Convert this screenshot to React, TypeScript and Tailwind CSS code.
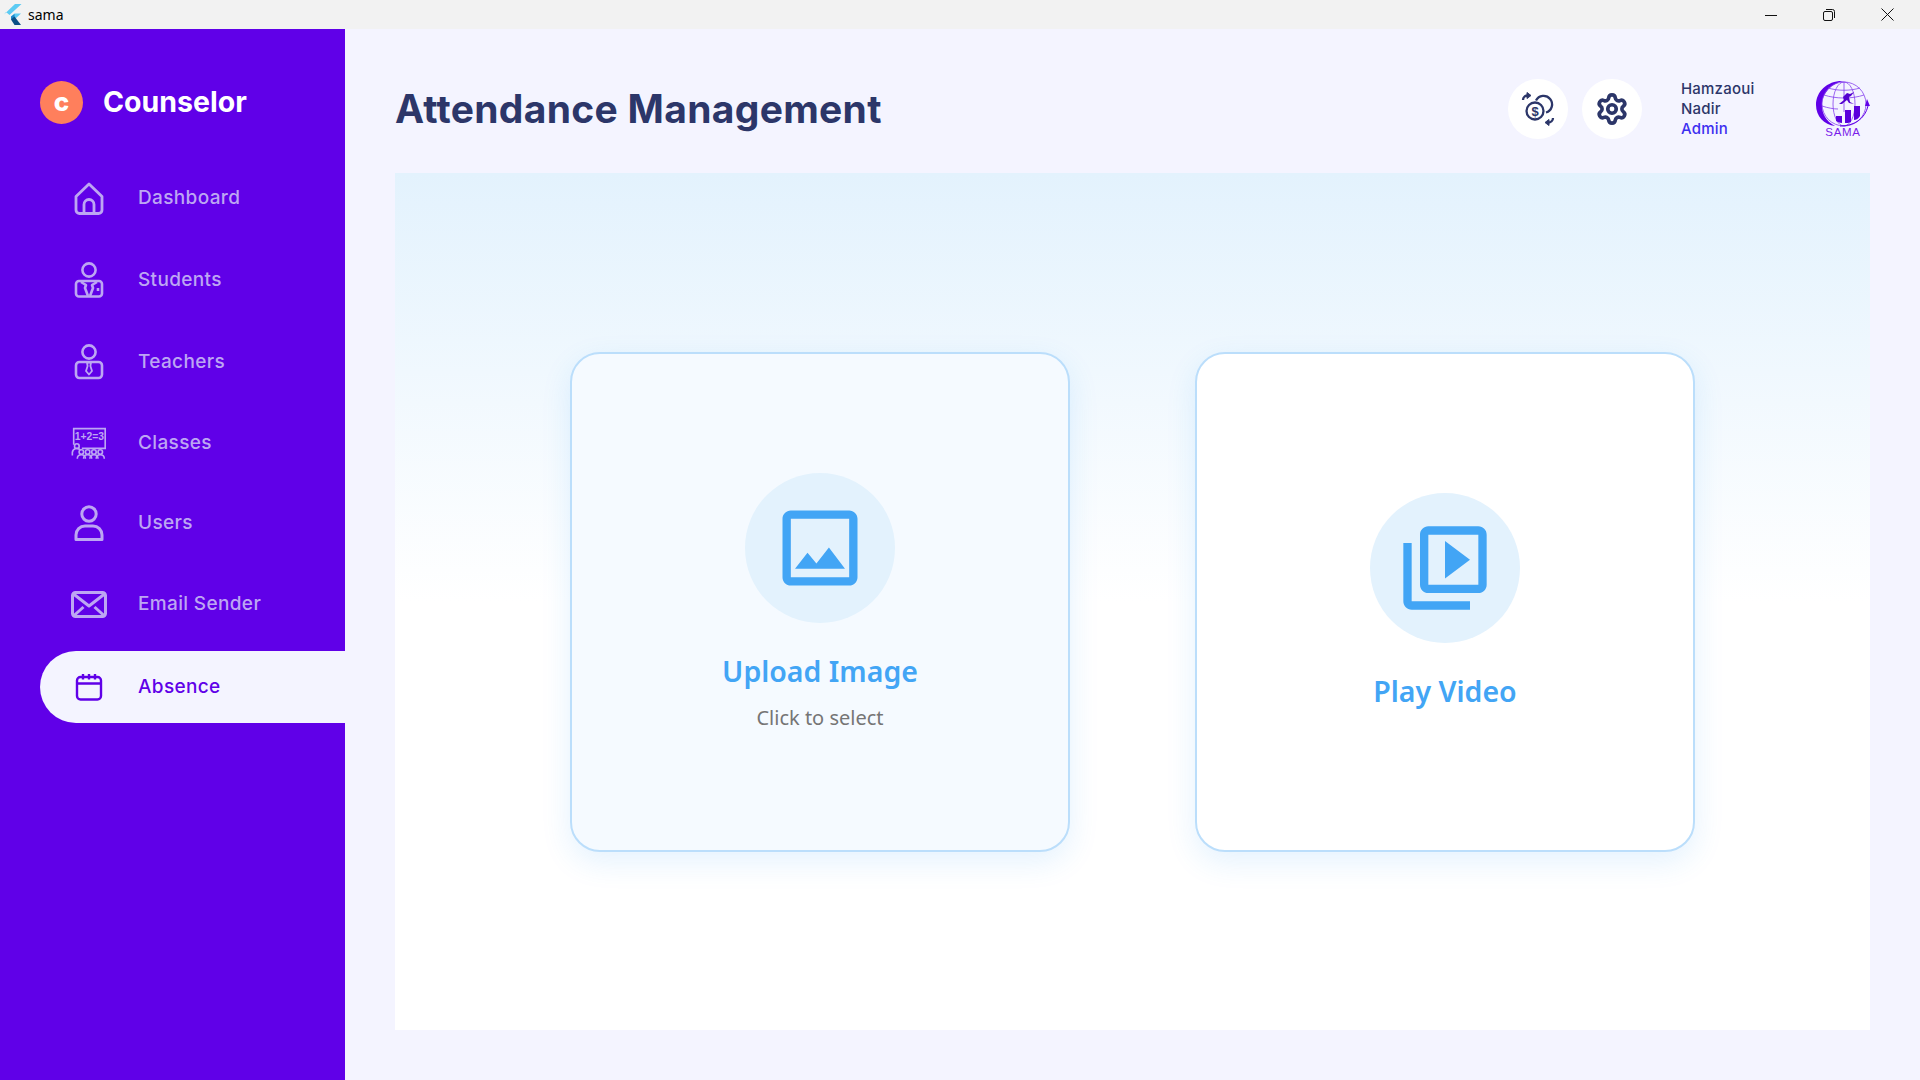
import { Settings } from "lucide-react";
import type { ReactNode } from "react";

const poppins = "font-['Inter','Liberation_Sans',sans-serif]";

function HomeIcon() {
  return (
    <svg width="30" height="33" viewBox="0 0 30 33" fill="none" stroke="currentColor" strokeWidth="2.8" strokeLinejoin="round">
      <path d="M2 14.5 15 2l13 12.5V28a3.5 3.5 0 0 1-3.5 3.5h-19A3.5 3.5 0 0 1 2 28Z" />
      <path d="M10 31V22.5a5 5 0 0 1 10 0V31" />
    </svg>
  );
}

function StudentIcon() {
  return (
    <svg width="30" height="36" viewBox="0 0 30 36" fill="none" stroke="currentColor" strokeWidth="2.6" strokeLinejoin="round">
      <circle cx="15" cy="8" r="6.6" />
      <rect x="2" y="19" width="26" height="15.5" rx="3" />
      <path d="M7 20l5 3-1 3 3 8M23 20l-5 3 1 3-3 8" />
      <path d="M24 26v3" />
    </svg>
  );
}

function TeacherIcon() {
  return (
    <svg width="30" height="36" viewBox="0 0 30 36" fill="none" stroke="currentColor" strokeWidth="2.6" strokeLinejoin="round">
      <circle cx="15" cy="8" r="6.6" />
      <rect x="2" y="18" width="26" height="16" rx="3.5" />
      <path d="M13 18.5h4l-.6 3.500 1.600 5-3 3.500-3-3.500 1.600-5Z" strokeWidth="1.8" />
    </svg>
  );
}

function ClassesIcon() {
  return (
    <svg width="40" height="36" viewBox="0 0 40 36" fill="none" stroke="currentColor" strokeWidth="1.8">
      <path d="M3 20V2h35v22H12" />
      <text x="20.5" y="15" textAnchor="middle" fontFamily="Liberation Sans, sans-serif" fontSize="11.5" fontWeight="700" fill="currentColor" stroke="none">
        1+2=3
      </text>
      <circle cx="6.5" cy="21.500" r="2.600" />
      <path d="M1.500 32v-3.500a5 5 0 0 1 9-2.500" />
      {[11, 18, 25, 32].map((x) => (
        <g key={x}>
          <circle cx={x + 0.5} cy="28" r="2.500" />
          <path d={`M${x - 4} 35.500c0-3 2-4.500 4.500-4.500S${x + 5} 32.500 ${x + 5} 35.500`} />
        </g>
      ))}
    </svg>
  );
}

function UserIcon() {
  return (
    <svg width="30" height="36" viewBox="0 0 30 36" fill="none" stroke="currentColor" strokeWidth="3" strokeLinejoin="round">
      <circle cx="15" cy="9" r="7.200" />
      <path d="M2 34.500V30a9 9 0 0 1 9-9h8a9 9 0 0 1 9 9v4.500Z" />
    </svg>
  );
}

function MailIcon() {
  return (
    <svg width="36" height="27" viewBox="0 0 36 27" fill="none" stroke="currentColor" strokeWidth="3" strokeLinejoin="round">
      <rect x="1.500" y="1.500" width="33" height="24" rx="3" />
      <path d="M2.500 3 18 15 33.500 3M3 24.500l9.500-8.500M33 24.500 23.500 16" />
    </svg>
  );
}

function CalendarIcon() {
  return (
    <svg width="28" height="28" viewBox="0 0 28 28" fill="none" stroke="currentColor" strokeWidth="2.400" strokeLinejoin="round">
      <rect x="2" y="4" width="24" height="22.500" rx="3.500" />
      <path d="M2 10.500h24M8 1v5.500M14 1v5.500M20 1v5.500" />
    </svg>
  );
}

function CoinsIcon() {
  return (
    <svg width="34" height="34" viewBox="0 0 34 34" fill="none" stroke="#2c3669" strokeWidth="2.300">
      <circle cx="14" cy="19" r="8.500" />
      <path d="M15 8.500a8.500 8.500 0 1 1 10 12" />
      <text x="14" y="23.500" textAnchor="middle" fontFamily="Liberation Sans, sans-serif" fontSize="13" fontWeight="700" fill="#2c3669" stroke="none">
        $
      </text>
      <path d="M2 8c0-2.500 2-4.500 5-4.500" />
      <path d="M6 .5l4 3-4 3Z" fill="#2c3669" strokeWidth="1" />
      <path d="M32 26c0 2.500-2 4.500-5 4.500" />
      <path d="M28 27.500l-4 3 4 3Z" fill="#2c3669" strokeWidth="1" />
    </svg>
  );
}

function SamaLogo() {
  return (
    <svg width="54" height="60" viewBox="0 0 54 60">
      <path d="M28 2C12 1 0 12 0 26c0 11 8 20 19 21C10 42 6 35 6 26 6 14 16 4 28 2Z" fill="#6000e8" />
      <g fill="none" stroke="#8540ee" strokeWidth=".8">
        <circle cx="28" cy="25" r="22" />
        <ellipse cx="28" cy="25" rx="11" ry="22" />
        <path d="M28 3v30M8 16c12 4 28 4 40 0M6 27c6 2 12 3 16 3M12 9c10 3 22 3 32 0" />
      </g>
      <path d="M27 18l4-4 3 1 4-2-3 4-2 1 1 5 4 2-5-1-2-3-5 4-3 0 5-4Z" fill="#5300d0" />
      <path d="M20 37h6v7c-2 0-4-1-6-2ZM29 31h6v12c-2 1-4 1-6 1ZM38 27h6v10c-2 3-4 4-6 4Z" fill="#5a00dc" />
      <path d="M24 47c14 0 25-7 28-20" fill="none" stroke="#6000e8" strokeWidth="1" />
      <path d="M51 20l3 7h-5Z" fill="#6000e8" />
      <text x="27" y="57" textAnchor="middle" fontFamily="Liberation Sans, sans-serif" fontSize="11.5" letterSpacing=".7" fill="#7a1bea">
        SAMA
      </text>
    </svg>
  );
}

function FlutterLogo() {
  return (
    <svg width="18" height="21" viewBox="0 0 18 21">
      <path d="M11 0h6.500L5.500 11 2 8 0 10.500Z" fill="#5ccbf3" />
      <path d="M10.500 9.500h6.500L10.500 15.500 7 12.500Z" fill="#5ccbf3" />
      <path d="M7 12.500l3.500-2.500v6l-3.500-.5Z" fill="#1c86c9" />
      <path d="M7 15.500l3.500-3 6.500 8.500h-6.500Z" fill="#0b4f86" />
    </svg>
  );
}

function ImageGlyph() {
  return (
    <svg width="100" height="100" viewBox="0 0 24 24" fill="#42a5f5">
      <path d="M19 5v14H5V5h14m0-2H5c-1.100 0-2 .9-2 2v14c0 1.100.9 2 2 2h14c1.100 0 2-.9 2-2V5c0-1.100-.9-2-2-2zm-4.860 8.860l-3 3.870L9 13.140 6 17h12l-3.860-5.140z" />
    </svg>
  );
}

function VideoGlyph() {
  return (
    <svg width="100" height="100" viewBox="0 0 24 24" fill="#42a5f5">
      <path d="M4 6H2v14c0 1.100.9 2 2 2h14v-2H4V6zm16-4H8c-1.100 0-2 .9-2 2v12c0 1.100.9 2 2 2h12c1.100 0 2-.9 2-2V4c0-1.100-.9-2-2-2zm0 14H8V4h12v12zM12 5.500v9l6-4.500z" />
    </svg>
  );
}

const NAV: { label: string; icon: ReactNode; gap: string; active?: boolean }[] = [
  { label: "Dashboard", icon: <HomeIcon />, gap: "mt-0" },
  { label: "Students", icon: <StudentIcon />, gap: "mt-[10px]" },
  { label: "Teachers", icon: <TeacherIcon />, gap: "mt-[10px]" },
  { label: "Classes", icon: <ClassesIcon />, gap: "mt-[9px]" },
  { label: "Users", icon: <UserIcon />, gap: "mt-[8px]" },
  { label: "Email Sender", icon: <MailIcon />, gap: "mt-[9px]" },
  { label: "Absence", icon: <CalendarIcon />, gap: "mt-[11px]", active: true },
];

function ActionCard({ title, sub, icon, tint }: { title: string; sub?: string; icon: ReactNode; tint: string }) {
  return (
    <div className={`w-[500px] h-[500px] rounded-[30px] border-2 border-[#bbdefb] flex flex-col items-center justify-center shadow-[0_10px_30px_rgba(33,150,243,0.12)] ${tint}`}>
      <div className="w-[150px] h-[150px] rounded-full bg-[#e3f2fd] flex items-center justify-center">{icon}</div>
      <div className="mt-[28px] text-[28.500px] leading-[40px] font-semibold text-[#42a5f5] font-['Noto_Sans',sans-serif]">{title}</div>
      {sub && <div className="mt-[14px] text-[20px] leading-[26px] text-[#757575] font-['Noto_Sans',sans-serif]">{sub}</div>}
    </div>
  );
}

export default function App() {
  return (
    <div className="w-[1920px] h-[1080px] flex flex-col overflow-hidden bg-[#f4f4ff]">
      {/* window title bar */}
      <div className="h-[29px] shrink-0 bg-[#f2f2f2] flex items-center pl-[4px] font-['Noto_Sans',sans-serif] text-[14px] text-black">
        <FlutterLogo />
        <span className="ml-[6px]">sama</span>
        <div className="ml-auto flex items-center text-[#111]">
          <div className="w-[58px] flex justify-center">
            <svg width="12" height="12" viewBox="0 0 12 12" stroke="currentColor"><path d="M0 6.500h12" /></svg>
          </div>
          <div className="w-[58px] flex justify-center">
            <svg width="12" height="12" viewBox="0 0 12 12" fill="none" stroke="currentColor"><rect x=".5" y="2.500" width="9" height="9" rx="1.500" /><path d="M3 .5h6.500a2 2 0 0 1 2 2V9" /></svg>
          </div>
          <div className="w-[58px] flex justify-center mr-[4px]">
            <svg width="13" height="13" viewBox="0 0 13 13" stroke="currentColor"><path d="M.5.5l12 12M12.500.5l-12 12" /></svg>
          </div>
        </div>
      </div>

      <div className="flex-1 flex min-h-0">
        {/* Sidebar */}
        <aside className={`w-[345px] shrink-0 bg-[#6000e8] pt-[52px] pl-[40px] ${poppins}`}>
          <div className="flex items-center h-[43px]">
            <div className="w-[43px] h-[43px] rounded-full bg-[#ff7f5c] flex items-center justify-center text-white text-[26px] font-extrabold pb-[3px]">c</div>
            <span className="ml-[20px] text-[28.500px] font-bold text-white">Counselor</span>
          </div>
          <nav className="mt-[38px] flex flex-col">
            {NAV.map((item) => (
              <div
                key={item.label}
                className={`h-[72px] flex items-center pl-[31px] ${item.gap} ${item.active ? "bg-[#f4f4ff] rounded-l-[36px] text-[#6000e8]" : "text-[#bda6f3]"}`}
              >
                <div className="w-[36px] h-[40px] flex items-center justify-center shrink-0">{item.icon}</div>
                <span className="ml-[31px] text-[19px] tracking-[0.35px] font-medium">{item.label}</span>
              </div>
            ))}
          </nav>
        </aside>

        {/* Main */}
        <main className="flex-1 min-w-0 flex flex-col pt-[50px] pl-[50px] pr-[50px] pb-[50px]">
          <header className="h-[60px] flex items-center shrink-0">
            <h1 className={`text-[39px] font-bold tracking-[0.3px] text-[#2c3669] ${poppins}`}>Attendance Management</h1>
            <div className="ml-auto flex items-center">
              <div className="w-[60px] h-[60px] rounded-full bg-white flex items-center justify-center"><CoinsIcon /></div>
              <div className="w-[60px] h-[60px] rounded-full bg-white flex items-center justify-center ml-[14px]">
                <Settings size={34} strokeWidth={2.6} color="#2c3669" />
              </div>
              <div className={`ml-[39px] w-[135px] text-[15px] tracking-[0.2px] leading-[20px] font-medium text-[#2c3669] ${poppins}`}>
                <div>Hamzaoui</div>
                <div>Nadir</div>
                <div className="text-[#3c2ff0]">Admin</div>
              </div>
              <SamaLogo />
            </div>
          </header>

          <section className="mt-[34px] flex-1 min-h-0 bg-gradient-to-b from-[#e3f2fd] to-white to-50% flex items-center justify-center gap-[125px]">
            <ActionCard title="Upload Image" sub="Click to select" icon={<ImageGlyph />} tint="bg-[#f5faff]" />
            <ActionCard title="Play Video" icon={<VideoGlyph />} tint="bg-white" />
          </section>
        </main>
      </div>
    </div>
  );
}
